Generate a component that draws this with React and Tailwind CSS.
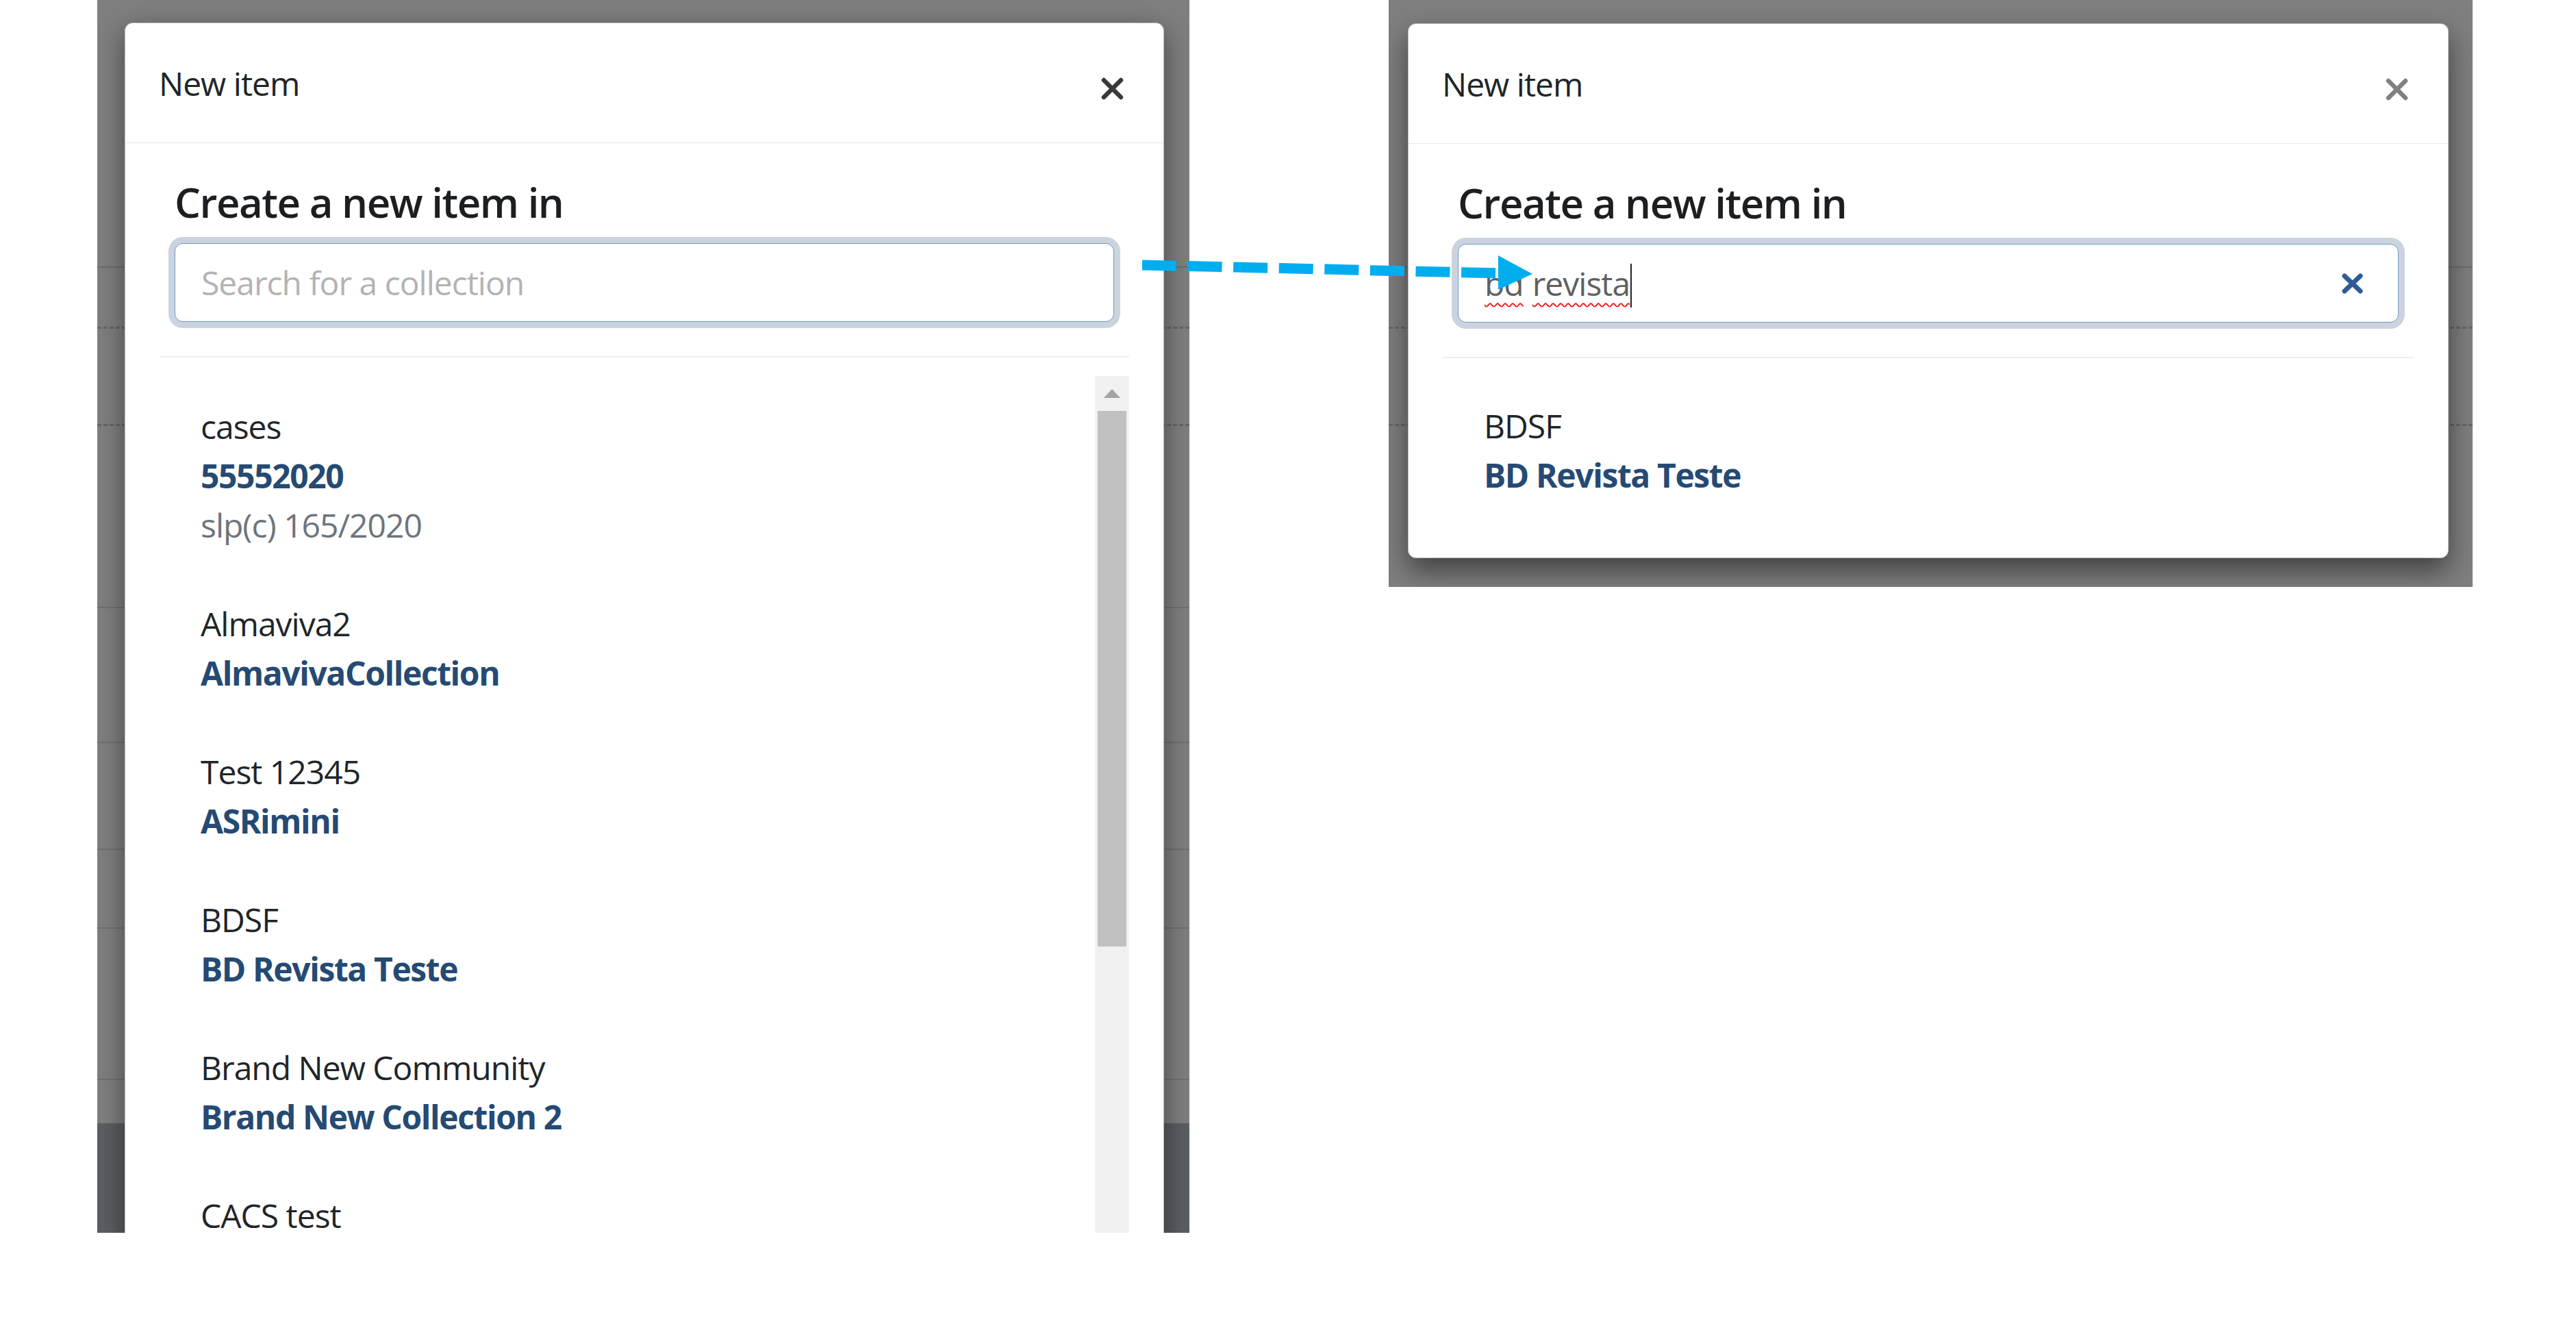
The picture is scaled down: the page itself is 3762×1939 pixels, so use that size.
import React from "react";

const FONT = "font-['Open_Sans','Noto_Sans',sans-serif]";

const leftItems = [
  { c: "cases", n: "55552020", e: "slp(c) 165/2020" },
  { c: "Almaviva2", n: "AlmavivaCollection" },
  { c: "Test 12345", n: "ASRimini" },
  { c: "BDSF", n: "BD Revista Teste" },
  { c: "Brand New Community", n: "Brand New Collection 2" },
  { c: "CACS test" },
];

function CloseX({ color }) {
  return (
    <svg width="35" height="35" viewBox="0 0 35 35" className="block shrink-0">
      <path d="M5 5 L30 30 M30 5 L5 30" stroke={color} strokeWidth="6.5" strokeLinecap="round" fill="none" />
    </svg>
  );
}

function Item({ c, n, e }) {
  return (
    <div className="py-[36px] text-[48px] leading-[72px] tracking-[-1px]">
      <div className="text-[#212529]">{c}</div>
      {n && <div className="font-bold text-[#254a73] tracking-[-1.4px]">{n}</div>}
      {e && <div className="text-[#6c757d]">{e}</div>}
    </div>
  );
}

function Header({ closeColor }) {
  return (
    <div className="h-[175px] border-b border-[#e3e7eb] flex justify-between items-start pl-[49px] pr-[57px] pt-[52px]">
      <div className="text-[48px] leading-[72px] text-[#212529] tracking-[-1px]">New item</div>
      <div className="mt-[26px]">
        <CloseX color={closeColor} />
      </div>
    </div>
  );
}

function PageRows({ full }) {
  return (
    <div className="flex flex-col h-full">
      <div className="h-[391px] shrink-0 border-b-2 border-[#6c6c6c]" />
      <div className="h-[89px] shrink-0 border-b-[3px] border-dashed border-[#666666]" />
      <div className="h-[142px] shrink-0 border-b-[3px] border-dashed border-[#666666]" />
      {full && (
        <>
          <div className="h-[266px] shrink-0 border-b-2 border-[#707070]" />
          <div className="h-[197px] shrink-0 border-b-2 border-[#707070]" />
          <div className="h-[156px] shrink-0 border-b-2 border-[#707070]" />
          <div className="h-[115px] shrink-0 border-b-2 border-[#707070]" />
          <div className="h-[221px] shrink-0 border-b-2 border-[#707070]" />
          <div className="h-[63px] shrink-0" />
          <div className="flex-1 bg-[#5b5e62]" />
        </>
      )}
    </div>
  );
}

function SearchBox({ children }) {
  return (
    <div className="h-[115px] border border-[#6b98c8] rounded-[12px] shadow-[0_0_0_9px_#cbd4de] bg-white flex items-center pl-[38px] pr-[50px]">
      {children}
    </div>
  );
}

export default function App() {
  return (
    <div className={`${FONT} relative w-[3762px] h-[1939px] bg-white overflow-hidden flex items-start pl-[142px] gap-[291px]`}>
      {/* Left panel */}
      <div className="relative w-[1595px] h-[1800px] shrink-0 overflow-hidden bg-[#7f7f7f]">
        <PageRows full />
        <div className="absolute left-[40px] top-[33px] w-[1518px] h-[1900px] bg-white rounded-[12px] border border-[#5a5a5a]/40 shadow-[0_12px_40px_rgba(0,0,0,0.45)]">
          <Header closeColor="#3a3a3a" />
          <div className="px-[50px] pt-[50px]">
            <div className="px-[22px]">
              <div className="text-[60px] leading-[72px] font-semibold text-[#1c1f22] tracking-[-1.5px] mb-[24px]">
                Create a new item in
              </div>
              <SearchBox>
                <span className="text-[48px] text-[#b3b3b3] tracking-[-1px]">Search for a collection</span>
              </SearchBox>
            </div>
            <div className="mt-[50px] border-t-2 border-[#eeeeee]" />
            <div className="mt-[27px] flex h-[1300px]">
              <div className="flex-1 pl-[60px] pt-[2px]">
                {leftItems.map((it) => (
                  <Item key={it.c} {...it} />
                ))}
              </div>
              <div className="w-[50px] bg-[#f1f1f1] flex flex-col items-center">
                <div className="h-[51px] w-full flex items-center justify-center">
                  <svg width="24" height="13" viewBox="0 0 24 13">
                    <polygon points="12,0 24,13 0,13" fill="#a3a3a3" />
                  </svg>
                </div>
                <div className="w-[42px] h-[782px] bg-[#c1c1c1]" />
              </div>
            </div>
          </div>
        </div>
      </div>

      {/* Right panel */}
      <div className="relative w-[1583px] h-[857px] shrink-0 overflow-hidden bg-[#7f7f7f]">
        <PageRows />
        <div className="absolute left-[28px] top-[34px] w-[1520px] bg-white rounded-[12px] border border-[#5a5a5a]/40 shadow-[0_18px_40px_rgba(0,0,0,0.5)]">
          <Header closeColor="#808080" />
          <div className="px-[50px] pt-[50px] pb-[48px]">
            <div className="px-[22px]">
              <div className="text-[60px] leading-[72px] font-semibold text-[#1c1f22] tracking-[-1.5px] mb-[24px]">
                Create a new item in
              </div>
              <SearchBox>
                <div className="flex-1 flex items-center text-[48px] text-[#606060] tracking-[-1px]">
                  <span className="underline decoration-wavy decoration-[#e81818] decoration-2 underline-offset-[10px]">bd</span>
                  <span className="w-[13px]" />
                  <span className="underline decoration-wavy decoration-[#e81818] decoration-2 underline-offset-[10px]">revista</span>
                  <span className="w-[2px] h-[64px] bg-[#222] ml-[1px] mt-[6px]" />
                </div>
                <svg width="33" height="32" viewBox="0 0 33 32" className="block shrink-0">
                  <path d="M5 5 L28 27 M28 5 L5 27" stroke="#2f5c97" strokeWidth="7" strokeLinecap="round" fill="none" />
                </svg>
              </SearchBox>
            </div>
            <div className="mt-[50px] border-t-2 border-[#eeeeee]" />
            <div className="mt-[27px] pl-[60px]">
              <Item c="BDSF" n="BD Revista Teste" />
            </div>
          </div>
        </div>
      </div>

      {/* Annotation arrow */}
      <svg width="600" height="70" viewBox="0 0 600 70" className="absolute left-[1660px] top-[365px] pointer-events-none">
        <line x1="8" y1="22" x2="530" y2="34" stroke="#00aeef" strokeWidth="15" strokeDasharray="50 16.6" />
        <polygon points="528,8 578,35 528,58" fill="#00aeef" />
      </svg>
    </div>
  );
}
